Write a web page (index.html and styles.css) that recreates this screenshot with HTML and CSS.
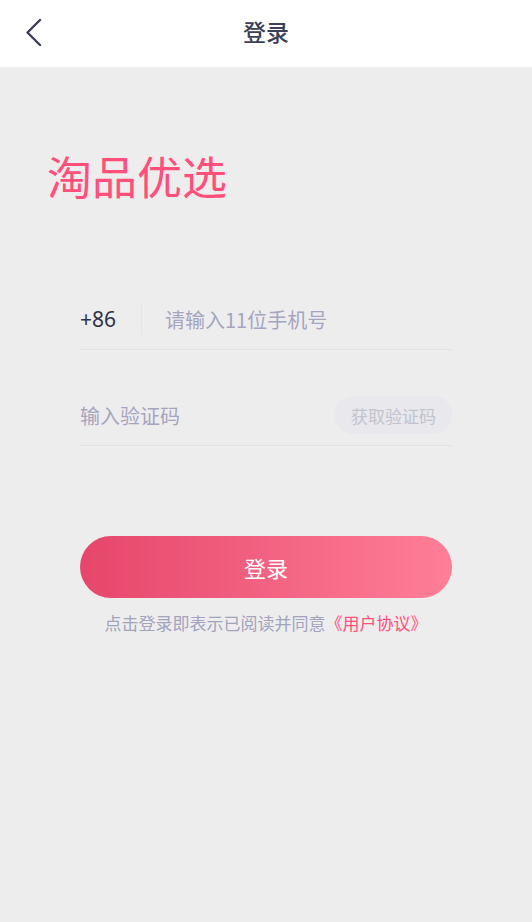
FILE: index.html
```html
<!doctype html>
<html lang="zh-CN">
    <head>
        <meta charset="UTF-8" />
        <meta name="viewport" content="width=device-width, initial-scale=1.0" />
        <title>登录</title>
        <link rel="stylesheet" href="styles.css">
    </head>
    <body>
        <header class="navbar">
            <a class="back" href="#">
                <svg width="20" height="30" viewBox="0 0 20 30">
                    <polyline points="16,4 3.5,16.5 16,29" fill="none" stroke="#3b3f57" stroke-width="2.4" stroke-linecap="round" stroke-linejoin="round" />
                </svg>
            </a>
            <h1 class="nav-title">登录</h1>
        </header>

        <main class="page">
            <div class="brand">淘品优选</div>

            <form class="login-form">
                <div class="field">
                    <span class="prefix">+86</span>
                    <input class="input" type="tel" placeholder="请输入11位手机号" />
                </div>
                <div class="field field-code">
                    <input class="input" type="text" placeholder="输入验证码" />
                    <button type="button" class="code-btn">获取验证码</button>
                </div>

                <button type="submit" class="submit-btn">登录</button>

                <p class="agreement">点击登录即表示已阅读并同意<a href="#">《用户协议》</a></p>
            </form>
        </main>
    </body>
</html>
```

FILE: styles.css
```css
* {
    box-sizing: border-box;
}
html,
body {
    height: 100%;
}
body {
    margin: 0;
    font-family: "Noto Sans CJK SC", "Noto Sans", sans-serif;
    background-color: #ededed;
    color: #3b3f57;
}
.navbar {
    position: relative;
    height: 67px;
    padding-bottom: 6px;
    background: #fff;
    display: flex;
    align-items: center;
    justify-content: center;
}
.back {
    position: absolute;
    left: 24px;
    top: 16px;
    display: block;
    line-height: 0;
}
.nav-title {
    margin: 0;
    font-size: 23px;
    font-weight: 500;
    color: #3b3f57;
}
.page {
    padding: 0 80px;
}
.brand {
    margin: 83px 0 0 -33px;
    font-size: 45px;
    line-height: 52px;
    color: #ff4f7a;
}
.login-form {
    margin-top: 87px;
}
.field {
    display: flex;
    align-items: center;
    height: 61px;
    border-bottom: 1px solid #e1e1e8;
}
.field-code {
    margin-top: 35px;
}
.prefix {
    font-family: "Noto Sans", sans-serif;
    font-size: 21px;
    color: #2f3348;
    width: 62px;
    height: 32px;
    line-height: 32px;
    border-right: 1px solid #e3e3e9;
    margin-right: 23px;
}
.input {
    flex: 1;
    min-width: 0;
    border: none;
    outline: none;
    background: transparent;
    padding: 0;
    font-family: "Noto Sans CJK SC", sans-serif;
    font-size: 20px;
    color: #3b3f57;
}
.input::placeholder {
    color: #a5a5c0;
}
.code-btn {
    width: 117px;
    height: 38px;
    border: none;
    border-radius: 19px;
    background: #e8e8ed;
    color: #c3c3ce;
    font-family: "Noto Sans CJK SC", sans-serif;
    font-size: 17px;
    padding: 0;
}
.submit-btn {
    display: block;
    width: 100%;
    height: 62px;
    margin-top: 90px;
    border: none;
    border-radius: 31px;
    background: linear-gradient(90deg, #e6466b, #ff7e98);
    color: #fff;
    font-family: "Noto Sans CJK SC", sans-serif;
    font-size: 22px;
    cursor: pointer;
}
.agreement {
    margin: 14px -30px 0;
    text-align: center;
    font-size: 17px;
    line-height: 22px;
    color: #a3a3bd;
}
.agreement a {
    color: #ff4f7a;
    text-decoration: none;
}
```
